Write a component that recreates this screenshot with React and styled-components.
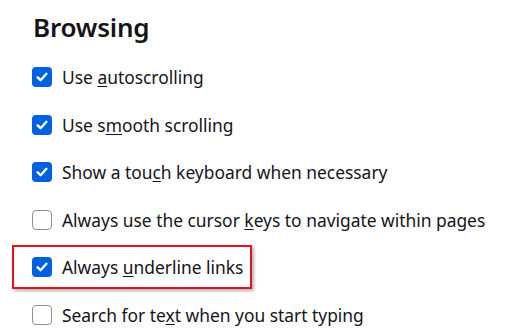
import React from "react";
import styled, { createGlobalStyle } from "styled-components";

const GlobalStyle = createGlobalStyle`
  html, body {
    margin: 0;
    background: #ffffff;
  }
  body {
    font-family: "Noto Sans", "Open Sans", sans-serif;
    color: #15141a;
  }
`;

const Page = styled.div`
  width: 527px;
  height: 332px;
  overflow: hidden;
  padding: 9px 0 0 32px;
  box-sizing: border-box;
`;

const Heading = styled.h1`
  margin: 0 0 22px 1px;
  font-size: 26px;
  font-weight: 600;
  line-height: 36px;
  letter-spacing: -0.2px;
`;

const List = styled.div`
  display: flex;
  flex-direction: column;
  gap: 27.6px;
`;

const Row = styled.label`
  position: relative;
  display: flex;
  align-items: center;
  gap: 10px;
  height: 20px;
  font-size: 17.4px;
  white-space: nowrap;
`;

const Box = styled.span`
  flex: none;
  width: 20px;
  height: 20px;
  box-sizing: border-box;
  border-radius: 4px;
  display: flex;
  align-items: center;
  justify-content: center;
  background: ${(p) => (p.$checked ? "#0061e0" : "#ffffff")};
  border: ${(p) => (p.$checked ? "none" : "1px solid #8f8f9d")};
`;

const Key = styled.span`
  text-decoration: underline;
  text-underline-offset: 2px;
  text-decoration-thickness: 1px;
`;

const Highlight = styled.span`
  position: absolute;
  left: -20px;
  top: -12px;
  width: 240px;
  height: 44px;
  box-sizing: border-box;
  border: 2px solid #e81123;
  box-shadow: 2px 2px 3px rgba(0, 0, 0, 0.3);
  pointer-events: none;
`;

const Check = () => (
  <svg width="14" height="14" viewBox="0 0 14 14" fill="none">
    <path
      d="M2.6 7.3 L5.6 10.2 L11.4 3.8"
      stroke="#ffffff"
      strokeWidth="2.4"
      strokeLinecap="round"
      strokeLinejoin="round"
    />
  </svg>
);

const options = [
  { checked: true, label: ["Use ", "a", "utoscrolling"] },
  { checked: true, label: ["Use s", "m", "ooth scrolling"] },
  { checked: true, label: ["Show a tou", "c", "h keyboard when necessary"] },
  { checked: false, label: ["Always use the cursor ", "k", "eys to navigate within pages"] },
  { checked: true, label: ["Always ", "u", "nderline links"], highlight: true },
  { checked: false, label: ["Search for te", "x", "t when you start typing"] },
];

export default function App() {
  return (
    <>
      <GlobalStyle />
      <Page>
        <Heading>Browsing</Heading>
        <List>
          {options.map((o, i) => (
            <Row key={i}>
              <Box $checked={o.checked}>{o.checked && <Check />}</Box>
              <span>
                {o.label[0]}
                <Key>{o.label[1]}</Key>
                {o.label[2]}
              </span>
              {o.highlight && <Highlight />}
            </Row>
          ))}
        </List>
      </Page>
    </>
  );
}
